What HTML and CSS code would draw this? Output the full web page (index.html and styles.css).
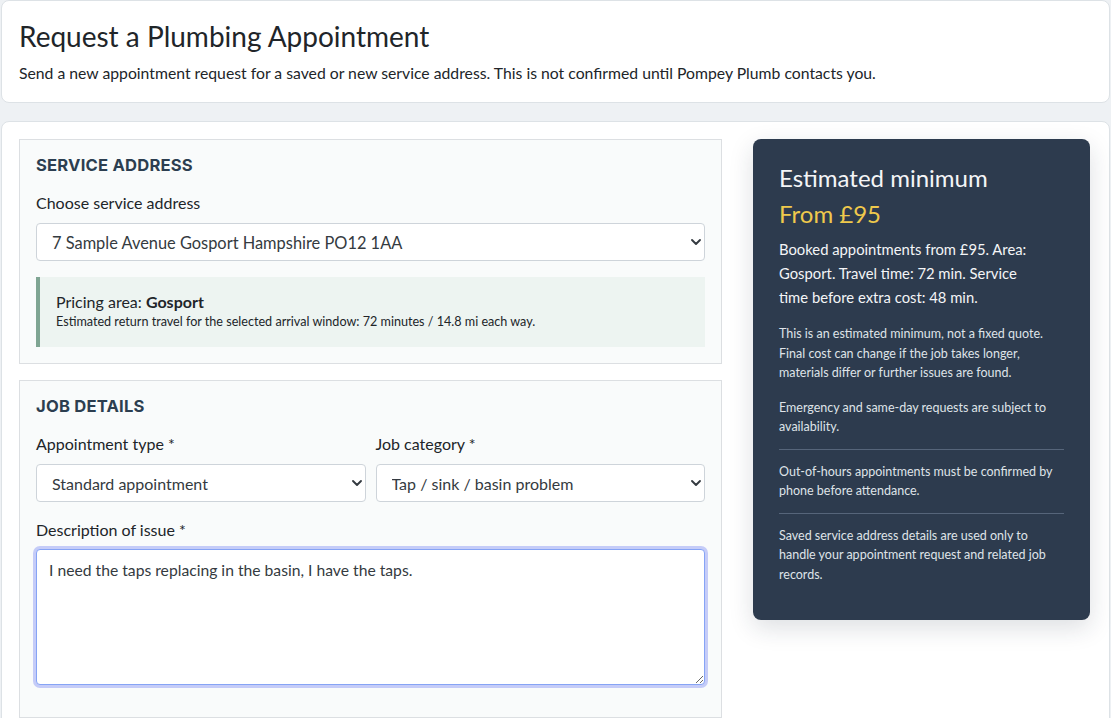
FILE: index.html
```html
<!DOCTYPE html>
<html lang="en">
<head>
<meta charset="utf-8">
<title>Request a Plumbing Appointment</title>
<link rel="stylesheet" href="styles.css">
</head>
<body>
<div class="page">
  <header class="card head">
    <h1 class="title">Request a Plumbing Appointment</h1>
    <p class="lead">Send a new appointment request for a saved or new service address. This is not confirmed until Pompey Plumb contacts you.</p>
  </header>
  <main class="card body">
    <div class="grid">
      <div class="forms">
        <section class="box">
          <h2 class="box-title">SERVICE ADDRESS</h2>
          <label class="label" for="addr">Choose service address</label>
          <div class="select-wrap">
            <select id="addr" class="select sel-addr"><option>7 Sample Avenue Gosport Hampshire PO12 1AA</option></select>
            <svg class="chev" viewBox="0 0 16 16"><path d="M4 6l4 4 4-4" fill="none" stroke="#343a40" stroke-width="1.9" stroke-linecap="round" stroke-linejoin="round"/></svg>
          </div>
          <div class="info">
            <div class="info-main">Pricing area: <strong>Gosport</strong></div>
            <div class="info-small">Estimated return travel for the selected arrival window: 72 minutes / 14.8 mi each way.</div>
          </div>
        </section>
        <section class="box">
          <h2 class="box-title">JOB DETAILS</h2>
          <div class="row">
            <div class="field">
              <label class="label" for="type">Appointment type *</label>
              <div class="select-wrap">
                <select id="type" class="select"><option>Standard appointment</option></select>
                <svg class="chev" viewBox="0 0 16 16"><path d="M4 6l4 4 4-4" fill="none" stroke="#343a40" stroke-width="1.9" stroke-linecap="round" stroke-linejoin="round"/></svg>
              </div>
            </div>
            <div class="field">
              <label class="label" for="cat">Job category *</label>
              <div class="select-wrap">
                <select id="cat" class="select"><option>Tap / sink / basin problem</option></select>
                <svg class="chev" viewBox="0 0 16 16"><path d="M4 6l4 4 4-4" fill="none" stroke="#343a40" stroke-width="1.9" stroke-linecap="round" stroke-linejoin="round"/></svg>
              </div>
            </div>
          </div>
          <label class="label" for="desc">Description of issue *</label>
          <textarea id="desc" class="textarea">I need the taps replacing in the basin, I have the taps.</textarea>
        </section>
      </div>
      <aside class="panel">
        <h3 class="panel-title">Estimated minimum</h3>
        <div class="panel-price">From £95</div>
        <p class="panel-text">Booked appointments from £95. Area: Gosport. Travel time: 72 min. Service<br>time before extra cost: 48 min.</p>
        <p class="panel-small">This is an estimated minimum, not a fixed quote. Final cost can change if the job takes longer, materials differ or further issues are found.</p>
        <p class="panel-small">Emergency and same-day requests are subject to availability.</p>
        <p class="panel-small sep">Out-of-hours appointments must be confirmed by phone before attendance.</p>
        <p class="panel-small sep">Saved service address details are used only to handle your appointment request and related job records.</p>
      </aside>
    </div>
  </main>
</div>
</body>
</html>
```
FILE: styles.css
```css
* { box-sizing: border-box; }
html, body { margin: 0; padding: 0; }
body {
  background: #eef1f4;
  font-family: Lato, "Open Sans", sans-serif;
  color: #212529;
  overflow: hidden;
}
.page { padding: 0 1px 0 1px; display: flex; flex-direction: column; gap: 18px; }
.card {
  background: #fff;
  border: 1px solid #dde2e6;
  border-radius: 8px;
}
.head { padding: 18px 18px 18px 17px; }
.title { margin: 0; font-size: 28px; font-weight: 400; line-height: 34px; color: #212529; }
.lead { margin: 9px 0 0 0; font-size: 15.75px; line-height: 22px; }
.body { padding: 17px 19px 20px 17px; }
.grid { display: grid; grid-template-columns: minmax(0, 1fr) 337px; gap: 31px; align-items: start; }
.forms { display: flex; flex-direction: column; gap: 16px; }
.box {
  background: #f9fbfb;
  border: 1px solid #dcdfe2;
  padding: 14px 16px 16px 16px;
}
.box-title {
  margin: 0 0 17px 0;
  font-family: Inter, "Open Sans", sans-serif;
  font-weight: 700;
  font-size: 16.6px;
  line-height: 22px;
  color: #2c3e50;
  letter-spacing: 0.2px;
}
.label { display: block; font-size: 16px; line-height: 20px; margin-bottom: 10px; color: #212529; }
.select-wrap { position: relative; }
.select {
  display: block; width: 100%; height: 38px;
  appearance: none; -webkit-appearance: none;
  background: #fff; border: 1px solid #ced4da; border-radius: 4px;
  padding: 0 36px 0 15px;
  font-family: Lato, sans-serif; font-size: 16px; color: #343a40;
}
.sel-addr { font-size: 16.4px; }
.chev { position: absolute; right: 1px; top: 11px; width: 16px; height: 16px; pointer-events: none; }
.info {
  margin-top: 16px;
  background: #edf4f1;
  border-left: 4px solid #7fa593;
  padding: 15px 16px 16px 16px;
}
.info-main { font-size: 16px; line-height: 20px; color: #212529; }
.info-main strong { font-weight: 700; }
.info-small { font-size: 12.6px; line-height: 19px; color: #212529; }
.row { display: grid; grid-template-columns: 1fr 1fr; gap: 10px; margin-bottom: 18px; }
.textarea {
  display: block; width: 100%; height: 136px;
  border: 1px solid #86a4f5; border-radius: 4px;
  box-shadow: 0 0 0 3px #c5ccf8;
  padding: 9px 12px;
  font-family: Lato, sans-serif; font-size: 15.7px; line-height: 22px; color: #343a40;
  resize: vertical; outline: none; margin-top: -1px; margin-bottom: 16px;
}
.panel {
  background: #2d3b4e;
  border-radius: 8px;
  color: #f1f3f5;
  padding: 24px 26px 36px 26px;
  box-shadow: 0 8px 24px rgba(30, 40, 60, 0.15);
}
.panel-title { margin: 0; font-size: 24px; font-weight: 400; line-height: 30px; color: #f4f5f7; }
.panel-price { font-size: 24px; line-height: 30px; margin-top: 6px; color: #efc94c; }
.panel-text { margin: 8px 0 0 0; font-size: 14.8px; line-height: 24px; color: #f4f5f7; }
.panel-small { margin: 15px 0 0 0; font-size: 12.5px; line-height: 19.5px; color: #dfe3e8; }
.panel-small.sep { border-top: 1px solid #56657a; padding-top: 12px; margin-top: 12px; }
```
